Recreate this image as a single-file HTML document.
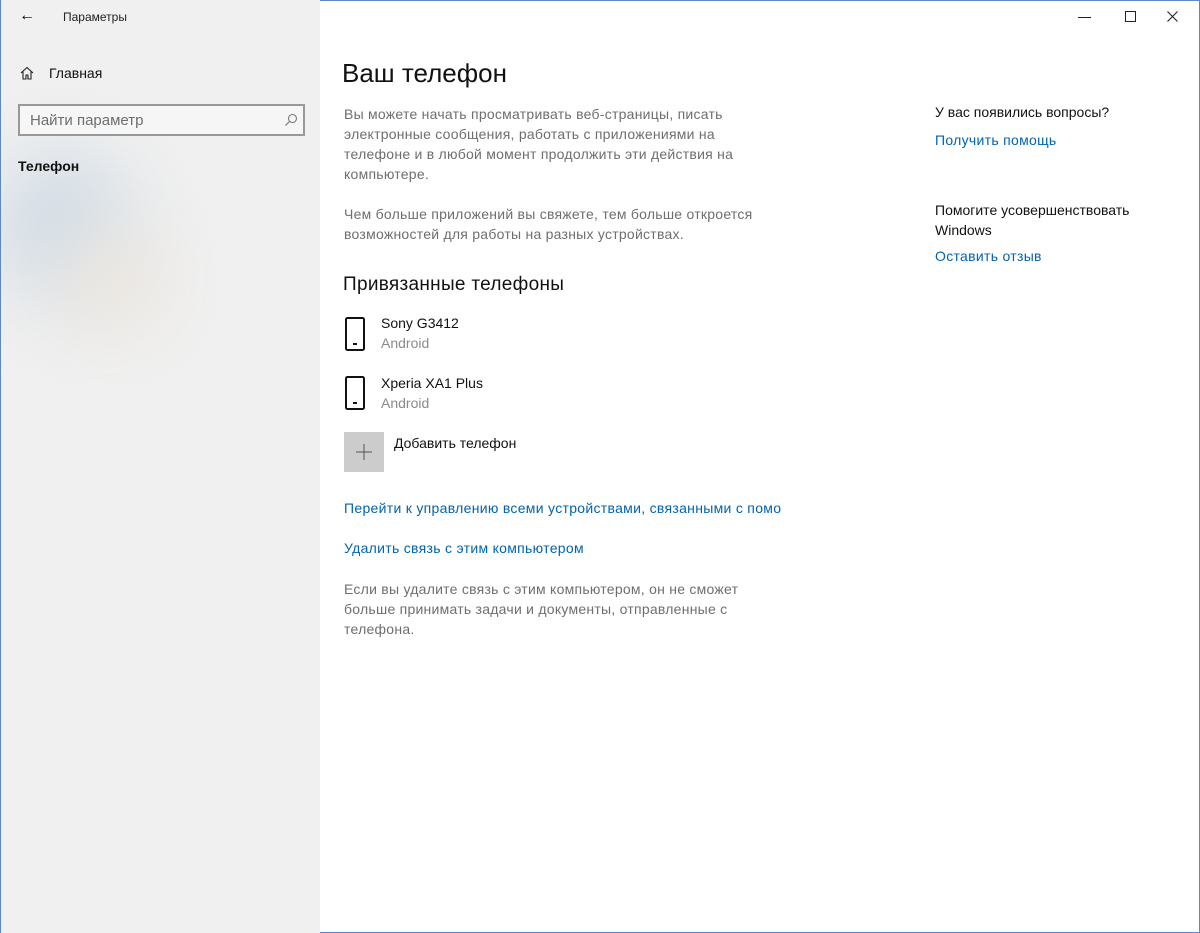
<!DOCTYPE html>
<html><head><meta charset="utf-8"><style>
body{margin:0;width:1200px;height:933px;overflow:hidden;font-family:"Liberation Sans","Noto Sans CJK SC",sans-serif;background:#fff;position:relative}
.side{position:absolute;left:0;top:0;width:320px;height:933px;background:#f0f0f0;overflow:hidden;border-left:1px solid #5a8ac6;box-sizing:border-box}
.blob{position:absolute;border-radius:50%;filter:blur(35px)}
.t{position:absolute;white-space:nowrap}
.gray{color:#6e6e6e;font-size:14px;line-height:20px;letter-spacing:0.25px}
.link{color:#0063b1;font-size:14px;letter-spacing:0.3px}
</style></head><body>
<div style="position:absolute;left:0;top:0;width:1200px;height:1px;background:#5a8ac6"></div>
<div style="position:absolute;right:0;top:0;width:1px;height:933px;background:#5a8ac6"></div>
<div style="position:absolute;left:0;bottom:0;width:1200px;height:1px;background:#5a8ac6"></div>
<div class="side">
<div class="blob" style="left:-10px;top:150px;width:140px;height:150px;background:#d3dde6"></div>
<div class="blob" style="left:60px;top:230px;width:100px;height:100px;background:#ece6de"></div>
<div class="t" style="left:18px;top:7px;font-size:16px">←</div>
<div class="t" style="left:62px;top:10px;font-size:12px;color:#222">Параметры</div>
<svg style="position:absolute;left:19px;top:66px" width="14" height="14" viewBox="0 0 14 14"><path d="M1 7 L7 1.5 L13 7 M3 5.5 V13 H6 V9 H8 V13 H11 V5.5" fill="none" stroke="#222" stroke-width="1.1"/></svg>
<div class="t" style="left:48px;top:65px;font-size:14px;color:#111">Главная</div>
<div style="position:absolute;left:17px;top:104px;width:287px;height:32px;border:2px solid #999;box-sizing:border-box;background:#f6f6f6"></div>
<div class="t" style="left:29px;top:112px;font-size:15px;color:#6e6e6e">Найти параметр</div>
<svg style="position:absolute;left:283px;top:113px" width="14" height="14" viewBox="0 0 14 14"><circle cx="8.5" cy="5.5" r="4" fill="none" stroke="#777" stroke-width="1.1"/><path d="M5.5 8.5 L1.5 12.5" stroke="#777" stroke-width="1.2"/></svg>
<div class="t" style="left:17px;top:158px;font-size:14px;font-weight:bold;color:#111">Телефон</div>
</div>
<div style="position:absolute;left:1078px;top:17px;width:13px;height:1px;background:#222"></div>
<div style="position:absolute;left:1125px;top:11px;width:9px;height:9px;border:1px solid #222"></div>
<svg style="position:absolute;left:1167px;top:11px" width="11" height="11" viewBox="0 0 11 11"><path d="M0.5 0.5 L10.5 10.5 M10.5 0.5 L0.5 10.5" stroke="#222" stroke-width="1.1"/></svg>
<div class="t" style="left:342px;top:58px;font-size:26px;color:#111">Ваш телефон</div>
<div class="t gray" style="left:344px;top:104px">Вы можете начать просматривать веб-страницы, писать<br>электронные сообщения, работать с приложениями на<br>телефоне и в любой момент продолжить эти действия на<br>компьютере.</div>
<div class="t gray" style="left:344px;top:204px">Чем больше приложений вы свяжете, тем больше откроется<br>возможностей для работы на разных устройствах.</div>
<div class="t" style="left:343px;top:274px;font-size:19px;color:#111;letter-spacing:0.3px">Привязанные телефоны</div>
<svg style="position:absolute;left:345px;top:317px" width="20" height="34" viewBox="0 0 20 34"><rect x="1" y="1" width="18" height="32" rx="1.5" fill="none" stroke="#111" stroke-width="2"/><rect x="8" y="26" width="4" height="2" fill="#111"/></svg>
<div class="t" style="left:381px;top:315px;font-size:14px;color:#111">Sony G3412</div>
<div class="t" style="left:381px;top:335px;font-size:14px;color:#8a8a8a">Android</div>
<svg style="position:absolute;left:345px;top:376px" width="20" height="34" viewBox="0 0 20 34"><rect x="1" y="1" width="18" height="32" rx="1.5" fill="none" stroke="#111" stroke-width="2"/><rect x="8" y="26" width="4" height="2" fill="#111"/></svg>
<div class="t" style="left:381px;top:375px;font-size:14px;color:#111">Xperia XA1 Plus</div>
<div class="t" style="left:381px;top:395px;font-size:14px;color:#8a8a8a">Android</div>
<div style="position:absolute;left:344px;top:432px;width:40px;height:40px;background:#ccc"></div>
<svg style="position:absolute;left:356px;top:444px" width="16" height="16" viewBox="0 0 16 16"><path d="M8 0 V16 M0 8 H16" stroke="#555" stroke-width="1"/></svg>
<div class="t" style="left:394px;top:435px;font-size:14px;color:#111">Добавить телефон</div>
<div class="t link" style="left:344px;top:500px">Перейти к управлению всеми устройствами, связанными с помо</div>
<div class="t link" style="left:344px;top:540px">Удалить связь с этим компьютером</div>
<div class="t gray" style="left:344px;top:579px">Если вы удалите связь с этим компьютером, он не сможет<br>больше принимать задачи и документы, отправленные с<br>телефона.</div>
<div class="t" style="left:935px;top:104px;font-size:14px;color:#111">У вас появились вопросы?</div>
<div class="t link" style="left:935px;top:132px">Получить помощь</div>
<div class="t" style="left:935px;top:200px;font-size:14px;color:#111;line-height:20px">Помогите усовершенствовать<br>Windows</div>
<div class="t link" style="left:935px;top:248px">Оставить отзыв</div>
</body></html>
